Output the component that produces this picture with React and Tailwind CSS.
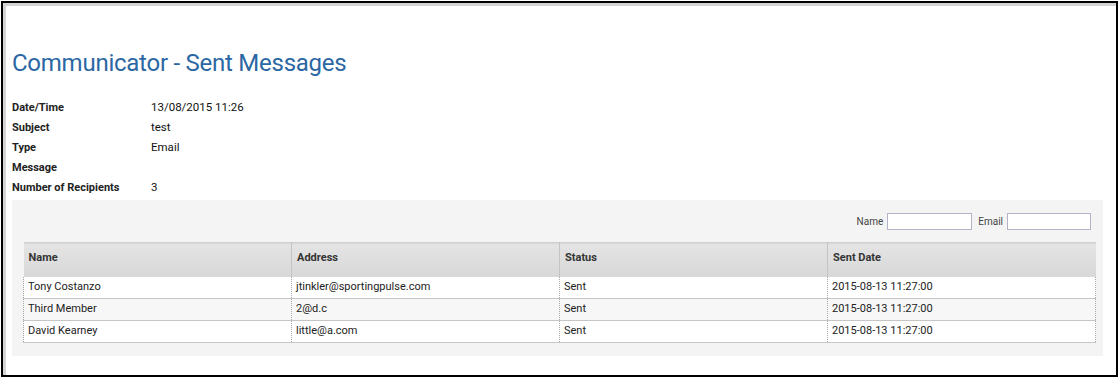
import React from "react";

const details = [
  { label: "Date/Time", value: "13/08/2015 11:26" },
  { label: "Subject", value: "test" },
  { label: "Type", value: "Email" },
  { label: "Message", value: "" },
  { label: "Number of Recipients", value: "3" },
];

const recipients = [
  { name: "Tony Costanzo", address: "jtinkler@sportingpulse.com", status: "Sent", sent: "2015-08-13 11:27:00" },
  { name: "Third Member", address: "2@d.c", status: "Sent", sent: "2015-08-13 11:27:00" },
  { name: "David Kearney", address: "little@a.com", status: "Sent", sent: "2015-08-13 11:27:00" },
];

const App = () => {
  return (
    <div className="w-[1120px] h-[378px] bg-white pl-px pt-px font-['Roboto',sans-serif] text-[#222]">
      <div className="w-[1117px] h-[376px] border-2 border-black shadow-[inset_3px_3px_0_#d4d4d4] pl-[9px] pr-[12px]">
        {/* タイトル */}
        <h1 className="pt-[45px] text-[24px] leading-[30px] text-[#2b67a3] tracking-[-0.25px]">
          Communicator - Sent Messages
        </h1>

        {/* 詳細 */}
        <div className="mt-[20px]">
          {details.map((d) => (
            <div key={d.label} className="flex h-[20px] items-center">
              <div className="w-[139px] text-[11px] font-bold text-[#222]">{d.label}</div>
              <div className="text-[11.5px] text-[#111]">{d.value}</div>
            </div>
          ))}
        </div>

        {/* 受信者一覧 */}
        <div className="mt-[2px] w-[1091px] h-[156px] bg-[#f4f4f4] pl-[11px] pr-[7px]">
          <div className="flex justify-end items-center gap-[4px] pt-[13px] pr-[5px] h-[30px] text-[10px] text-[#444]">
            <span>Name</span>
            <input type="text" className="w-[85px] h-[17px] bg-white border border-[#b4b4c6]" />
            <span className="ml-[2px]">Email</span>
            <input type="text" className="w-[84px] h-[17px] bg-white border border-[#b4b4c6]" />
          </div>

          <table className="mt-[12px] w-[1073px] table-fixed border-collapse text-[11px]">
            <thead>
              <tr className="h-[34px] bg-gradient-to-b from-[#e4e4e4] to-[#d8d8d8] border-t border-[#cfcfcf]">
                <th className="text-left font-bold pl-[5px] pb-[3px] text-[#333] border-r border-[#c4c4c4]">Name</th>
                <th className="text-left font-bold pl-[5px] pb-[3px] text-[#333] border-r border-[#c4c4c4]">Address</th>
                <th className="text-left font-bold pl-[5px] pb-[3px] text-[#333] border-r border-[#c4c4c4]">Status</th>
                <th className="text-left font-bold pl-[5px] pb-[3px] text-[#333]">Sent Date</th>
              </tr>
            </thead>
            <tbody>
              {recipients.map((r, i) => (
                <tr
                  key={r.name}
                  className={`h-[22px] border-b border-[#c6c6c6] ${i === 1 ? "bg-[#f7f7f7]" : "bg-white"}`}
                >
                  <td className="pl-[4px] border-l border-r border-dotted border-l-[#a8a8a8] border-r-[#a8a8a8]">{r.name}</td>
                  <td className="pl-[4px] border-r border-dotted border-r-[#a8a8a8]">{r.address}</td>
                  <td className="pl-[4px] border-r border-dotted border-r-[#a8a8a8]">{r.status}</td>
                  <td className="pl-[4px] border-r border-dotted border-r-[#a8a8a8]">{r.sent}</td>
                </tr>
              ))}
            </tbody>
          </table>
        </div>
      </div>
    </div>
  );
};

export default App;
